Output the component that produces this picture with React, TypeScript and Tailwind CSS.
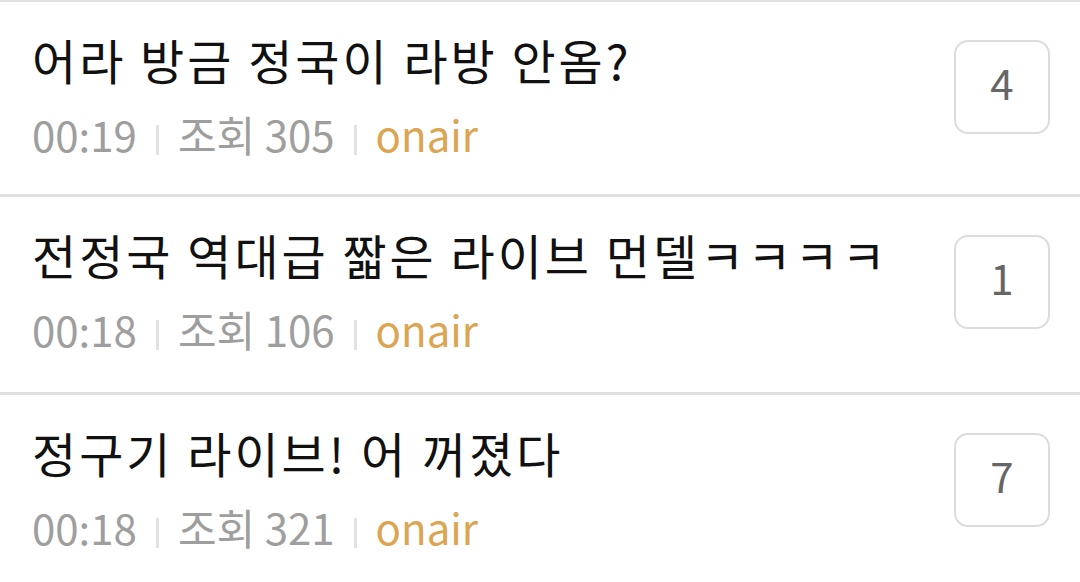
type Post = {
  title: string;
  time: string;
  views: number;
  board: string;
  comments: number;
};

const posts: Post[] = [
  { title: '어라 방금 정국이 라방 안옴?', time: '00:19', views: 305, board: 'onair', comments: 4 },
  { title: '전정국 역대급 짧은 라이브 먼델ㅋㅋㅋㅋ', time: '00:18', views: 106, board: 'onair', comments: 1 },
  { title: '정구기 라이브! 어 꺼졌다', time: '00:18', views: 321, board: 'onair', comments: 7 },
];

const font = { fontFamily: '"Noto Sans CJK KR", "Noto Sans", sans-serif' };

function Divider() {
  return <span className="mx-[19px] inline-block h-[30px] w-[3px] self-end mb-[4px] bg-[#e2e2e2]" />;
}

function PostRow({ post, first }: { post: Post; first?: boolean }) {
  return (
    <li
      className={`flex items-start justify-between border-b-[3px] border-[#e0e0e0] pl-[32px] pr-[30px] pt-[27px] ${
        first ? 'h-[195px]' : 'h-[198px]'
      }`}
    >
      <div className="flex flex-col">
        <p className="text-[48px] leading-[60px] tracking-[3px] text-[#111]">{post.title}</p>
        <div className="mt-[20px] flex items-end text-[42px] leading-[50px] text-[#9e9e9e]">
          <span>{post.time}</span>
          <Divider />
          <span>조회 {post.views}</span>
          <Divider />
          <span className="text-[#dba552]">{post.board}</span>
        </div>
      </div>
      <div className="mt-[11px] flex h-[94px] w-[96px] items-center justify-center rounded-[14px] border-2 border-[#dcdcdc] pb-[11px] text-[42px] text-[#666]">
        {post.comments}
      </div>
    </li>
  );
}

export default function App() {
  return (
    <div className="h-[582px] w-[1080px] overflow-hidden bg-white" style={font}>
      <ul className="border-t-2 border-[#e0e0e0]">
        {posts.map((p, i) => (
          <PostRow key={i} post={p} first={i === 0} />
        ))}
      </ul>
    </div>
  );
}
